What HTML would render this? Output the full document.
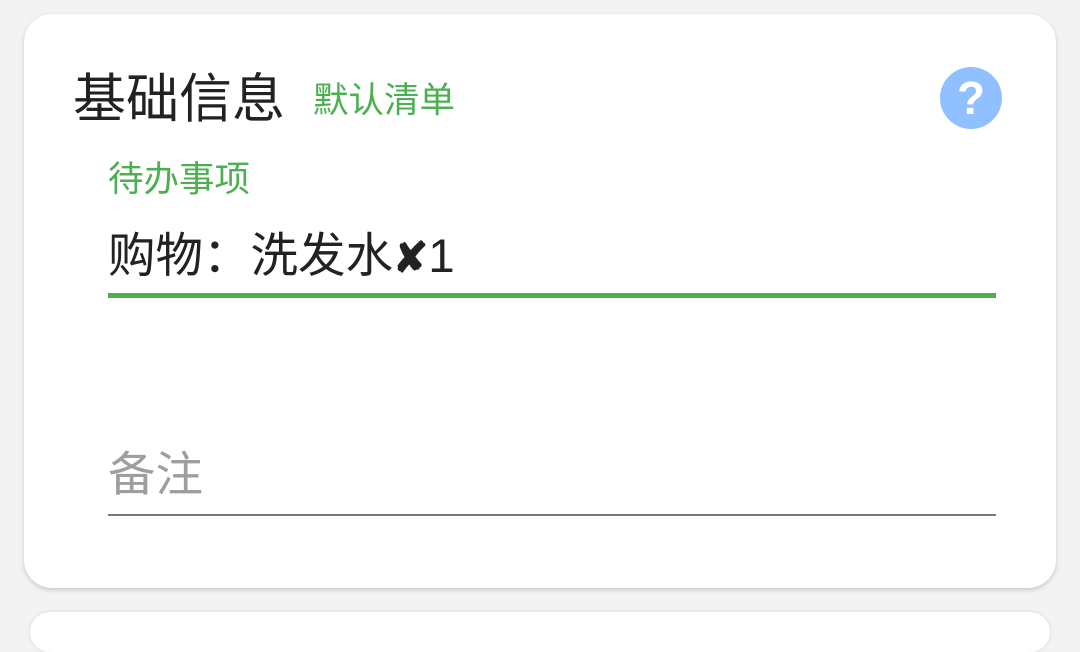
<!DOCTYPE html>
<html><head><meta charset="utf-8"><style>
body{margin:0;width:1080px;height:617px;background:#f3f3f3;position:relative;overflow:hidden;font-family:"Liberation Sans","Noto Sans CJK SC",sans-serif}
.card{position:absolute;left:24px;top:14px;width:1032px;height:574px;background:#fff;border-radius:28px;box-shadow:0 2px 5px rgba(0,0,0,.18)}
.card2{position:absolute;left:30px;top:612px;width:1020px;height:40px;background:#fff;border-radius:28px;box-shadow:0 0 4px rgba(0,0,0,.12)}
.t{position:absolute;white-space:nowrap;line-height:1}
</style></head><body>
<div class="card"></div>
<div class="card2"></div>
<div class="t" style="left:73px;top:73px;font-size:53px;color:#222">基础信息</div>
<div class="t" style="left:313px;top:83px;font-size:35.5px;color:#4caf50">默认清单</div>
<div style="position:absolute;left:940px;top:67px;width:62px;height:62px;border-radius:50%;background:#90c0ff;color:#fff;font:bold 46px/62px 'Liberation Sans',sans-serif;text-align:center">?</div>
<div class="t" style="left:108px;top:162px;font-size:35.5px;color:#4caf50">待办事项</div>
<div class="t" style="left:108px;top:233px;font-size:47.5px;color:#222">购物：洗发水<span style="font-weight:bold;font-size:42px">✘</span>1</div>
<div style="position:absolute;left:108px;top:293px;width:888px;height:5px;background:#4caf50"></div>
<div class="t" style="left:108px;top:452px;font-size:47.5px;color:#9e9e9e">备注</div>
<div style="position:absolute;left:108px;top:514px;width:888px;height:2px;background:#777"></div>
</body></html>
